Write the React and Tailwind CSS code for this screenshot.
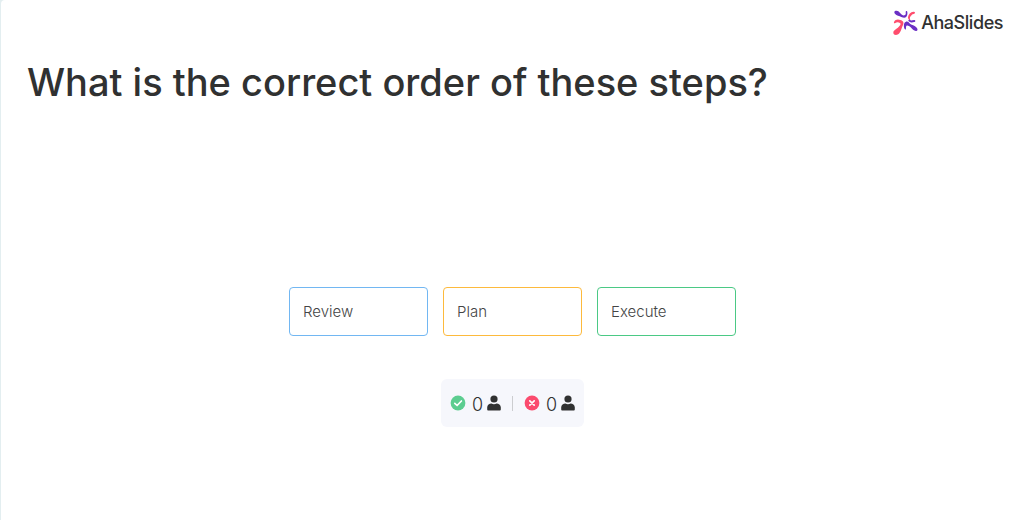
import clsx from 'clsx'

const STEPS = [
  { label: 'Review', border: 'border-[#72b7f2]' },
  { label: 'Plan', border: 'border-[#fdba3d]' },
  { label: 'Execute', border: 'border-[#4bc985]' },
]

function LogoMark() {
  return (
    <svg viewBox="0 0 75 78" className="w-[25px] h-[26px]" fill="none" strokeLinecap="round" strokeLinejoin="round" aria-hidden="true">
      {/* Top left petal, hooked up to the top */}
      <path d="M6 3C13 0 19 5 22 10C25 14 30 17 34 16C38 15 39 11 38 6C38 2 43 2 43 7C44 16 41 23 34 23C28 23 22 19 15 17C6 14 1 7 6 3Z" fill="#6a2fc4" />
      {/* Top right petal */}
      <path d="M61 5C67 4 68 11 62 12C57 12 56 16 53 19C50 22 50 26 52 30C48 31 45 27 45 22C46 13 53 6 61 5Z" fill="#ff4d6d" />
      {/* Bottom left petal */}
      <path d="M3 36C7 28 15 27 22 30C30 32 34 38 30 45C26 51 26 61 19 70C13 77 1 76 1 68C1 61 10 58 16 52C21 47 25 42 21 39C16 36 10 37 7 39C4 41 2 39 3 36Z" fill="#ff4d6d" />
      {/* Bottom right petal with its two tails */}
      <path d="M38 36C43 32 48 38 52 42C57 46 64 46 69 51C75 56 75 62 70 63C63 64 58 57 53 52C48 48 43 45 40 48C38 51 40 56 38 59C33 58 32 49 33 43C34 39 35 37 38 36Z" fill="#6a2fc4" />
      <path d="M49 32C54 37 58 33 64 33" stroke="#6a2fc4" strokeWidth="6" />
    </svg>
  )
}

function PersonIcon() {
  return (
    <svg viewBox="0 0 14 16" className="w-[14px] h-4" fill="#303131" aria-hidden="true">
      <circle cx="7" cy="4" r="3.6" />
      <path d="M1 15.500C.6 15.500 .2 15.200 .2 14.600V12.300C.2 10 2.400 8.600 4.400 8.600C5.900 9.400 8.100 9.400 9.600 8.600C11.600 8.600 13.800 10 13.800 12.300V14.600C13.800 15.200 13.400 15.500 13 15.500Z" />
    </svg>
  )
}

function ResultCount({ correct, count }) {
  return (
    <div className="flex items-center">
      <svg viewBox="0 0 16 16" className="w-4 h-4 mr-1.5" role="img" aria-label={correct ? 'Correct' : 'Incorrect'}>
        <circle cx="8" cy="8" r="7.4" fill={correct ? '#5ccd90' : '#fb4b6e'} />
        <path
          d={correct ? 'M4.8 8.3L7.1 10.5L11.4 6' : 'M5.8 5.8L10.2 10.2M10.2 5.8L5.8 10.2'}
          fill="none"
          stroke="#fff"
          strokeWidth="1.7"
          strokeLinecap="round"
          strokeLinejoin="round"
        />
      </svg>
      <span className="text-lg leading-6 font-light text-[#303131] pt-1 mr-1">{count}</span>
      <PersonIcon />
    </div>
  )
}

export default function App() {
  return (
    <div className="min-h-screen bg-[#e3eef0] pl-px font-['Inter',sans-serif]">
      <main className="min-h-screen flex flex-col rounded-tl-sm bg-white">
        <header className="flex justify-end px-[21px] pt-2.5">
          <a href="#" className="flex items-center gap-[3px] text-[#303131]">
            <LogoMark />
            <span className="text-lg leading-6 font-medium tracking-tight">AhaSlides</span>
          </a>
        </header>

        <h1 className="px-[26px] mt-5 text-[38px] leading-[52px] font-medium text-[#303131]">
          What is the correct order of these steps?
        </h1>

        <section className="flex flex-col items-center mt-[179px]">
          <ul className="flex gap-[15px]">
            {STEPS.map(step => (
              <li
                key={step.label}
                className={clsx('w-[139px] rounded-sm border px-[13px] pt-3 pb-[11px] text-[15px] leading-6 font-light text-[#444545]', step.border)}
              >
                {step.label}
              </li>
            ))}
          </ul>

          {/* Answer totals */}
          <div className="flex items-center mt-[43px] h-12 px-[9px] rounded-md bg-[#f6f7fc]">
            <ResultCount correct count={0} />
            <span className="w-px h-[15px] mx-[11px] bg-[#cccdd0]" />
            <ResultCount count={0} />
          </div>
        </section>
      </main>
    </div>
  )
}
